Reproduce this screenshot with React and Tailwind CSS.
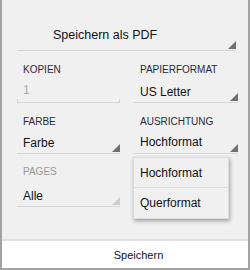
const font = { fontFamily: '"Liberation Sans", Arial, sans-serif' };

function Corner({ light }) {
  return (
    <span
      className={`absolute right-0 bottom-[1px] w-[8px] h-[8px] [clip-path:polygon(100%_0,100%_100%,0_100%)] ${
        light ? "bg-[#cfcfcf]" : "bg-[#707070]"
      }`}
    />
  );
}

function Field({ label, value, labelMuted, valueMuted, cornerLight, noCorner, boxH, padTop }) {
  return (
    <div>
      <div className={`pl-[6px] text-[10px] leading-[12px] ${labelMuted ? "text-[#9a9a9a]" : "text-[#2a2a3a]"}`}>{label}</div>
      <div className={`relative border-b border-[#d6d6d6] pl-[6px] ${boxH}`}>
        <div className={`text-[12px] leading-[16px] ${padTop} ${valueMuted ? "text-[#a8a8a8]" : "text-[#111]"}`}>{value}</div>
        {noCorner ? (
          <span className="absolute left-0 right-0 bottom-0 h-[3px] border-x border-[#d6d6d6]" />
        ) : (
          <Corner light={cornerLight} />
        )}
      </div>
    </div>
  );
}

export default function App() {
  return (
    <div className="w-[250px] h-[270px] flex flex-col bg-[#f0f0f0] border-x-2 border-b-2 border-[#a3a3a3]" style={font}>
      <div className="relative flex-1 pl-[15px] pr-[12px]">
        <div className="relative mt-[26px] h-[25px] border-b border-[#d6d6d6] pl-[36px] pt-[1px]">
          <div className="text-[12.5px] leading-[16px] text-[#111]">Speichern als PDF</div>
          <Corner />
        </div>

        <div className="mt-[13px] grid grid-cols-[103px_104px] gap-x-[14px]">
          <Field label="KOPIEN" value="1" valueMuted noCorner boxH="h-[27px]" padTop="pt-[6px]" />
          <Field label="PAPIERFORMAT" value="US Letter" boxH="h-[27px]" padTop="pt-[8px]" />
        </div>

        <div className="mt-[13px] grid grid-cols-[103px_104px] gap-x-[14px]">
          <Field label="FARBE" value="Farbe" boxH="h-[26px]" padTop="pt-[7px]" />
          <Field label="AUSRICHTUNG" value="Hochformat" boxH="h-[26px]" padTop="pt-[6px]" />
        </div>

        <div className="mt-[12px] grid grid-cols-[103px_104px] gap-x-[14px]">
          <Field label="PAGES" value="Alle" labelMuted cornerLight boxH="h-[29px]" padTop="pt-[10px]" />
          <div />
        </div>

        <div className="absolute left-[131px] top-[157px] w-[96px] h-[62px] bg-[#f0f0f0] border border-[#dcdcdc] shadow-[1px_2px_4px_rgba(0,0,0,0.35)] flex flex-col">
          <div className="h-[30px] border-b border-[#dedede] pl-[6px] pt-[7px] text-[12px] leading-[16px] text-[#111]">Hochformat</div>
          <div className="flex-1 pl-[6px] pt-[7px] text-[12px] leading-[16px] text-[#111]">Querformat</div>
        </div>
      </div>
      <div className="h-[29px] border-t-2 border-[#e0e0e0] bg-white flex items-center justify-center pl-[27px] text-[11px] leading-[14px] text-[#111]">
        Speichern
      </div>
    </div>
  );
}
